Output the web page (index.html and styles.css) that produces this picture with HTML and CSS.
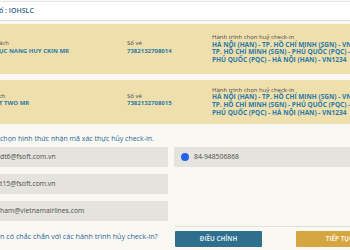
FILE: index.html
```html
<!DOCTYPE html>
<html lang="vi">
<head>
    <meta charset="UTF-8">
    <title>Hủy check-in</title>
    <link rel="stylesheet" href="styles.css">
</head>
<body>
<div class="page">
    <div class="pnr-box">ố : IOHSLC</div>

    <div class="ticket ticket-first">
        <div class="col">
            <div class="label">ách</div>
            <div class="value">ỤC NANG HUY CKIN MR</div>
        </div>
        <div class="col">
            <div class="label">Số vé</div>
            <div class="value">7382132708014</div>
        </div>
        <div class="route">
            <div class="label">Hành trình chọn huỷ check-in</div>
            <div class="value">HÀ NỘI (HAN) - TP. HỒ CHÍ MINH (SGN) - VN1234</div>
            <div class="value">TP. HỒ CHÍ MINH (SGN) - PHÚ QUỐC (PQC) - VN1234</div>
            <div class="value">PHÚ QUỐC (PQC) - HÀ NỘI (HAN) - VN1234</div>
        </div>
    </div>

    <div class="ticket">
        <div class="col">
            <div class="label">ch</div>
            <div class="value">T TWO MR</div>
        </div>
        <div class="col">
            <div class="label">Số vé</div>
            <div class="value">7382132708015</div>
        </div>
        <div class="route">
            <div class="label">Hành trình chọn huỷ check-in</div>
            <div class="value">HÀ NỘI (HAN) - TP. HỒ CHÍ MINH (SGN) - VN1234</div>
            <div class="value">TP. HỒ CHÍ MINH (SGN) - PHÚ QUỐC (PQC) - VN1234</div>
            <div class="value">PHÚ QUỐC (PQC) - HÀ NỘI (HAN) - VN1234</div>
        </div>
    </div>

    <p class="hint">chọn hình thức nhận mã xác thực hủy check-in.</p>

    <div class="options">
        <div class="option">dt6@fsoft.com.vn</div>
        <div class="option option-phone"><span class="radio"></span>84-948506868</div>
        <div class="option">t15@fsoft.com.vn</div>
        <div class="empty"></div>
        <div class="option">ham@vietnamairlines.com</div>
        <div class="empty"></div>
    </div>

    <div class="footer">
        <div class="question">n có chắc chắn với các hành trình hủy check-in?</div>
        <div class="actions">
            <a class="button button-edit" href="#">ĐIỀU CHỈNH</a>
            <a class="button button-next" href="#">TIẾP TỤC</a>
        </div>
    </div>
</div>
</body>
</html>
```

FILE: styles.css
```css
html,body{
    width: 100%;
    height: 100%;
    margin: 0;
    padding: 0;
    overflow: hidden;
    background-color: #f9f8f3;
    font-family: "Open Sans","Noto Sans",Arial,sans-serif;
}
.page{
    width: 400px;
}
.pnr-box{
    margin-top: 1px;
    height: 18px;
    line-height: 18px;
    background-color: #fff;
    border-top: 1px solid #e6e6e6;
    border-bottom: 1px solid #d8d8d8;
    font-size: 7px;
    font-weight: 600;
    color: #2c5f88;
    text-indent: -1px;
}
.ticket{
    display: grid;
    grid-template-columns: 128px 84px 1fr;
    background-color: #efdfad;
    margin-top: 6px;
    padding: 7px 0;
}
.ticket-first{
    margin-top: 3px;
    padding: 10px 0;
}
.ticket .col{
    padding-top: 6px;
}
.ticket .label{
    font-size: 6px;
    line-height: 7.5px;
    color: #4a4a4a;
    white-space: nowrap;
}
.ticket .value{
    font-size: 6.5px;
    line-height: 7.5px;
    font-weight: 700;
    color: #2a7aa6;
    white-space: nowrap;
}
.ticket .col .value{
    font-size: 6px;
}
.ticket .col .label,
.ticket .col .value{
    text-indent: -1px;
}
.ticket .route .label{
    line-height: 6.5px;
}
.ticket .route .value{
    line-height: 7.8px;
}
.hint{
    margin: 11px 0 0;
    font-size: 7px;
    line-height: 8px;
    color: #2a6797;
}
.options{
    display: grid;
    grid-template-columns: 168px 1fr;
    grid-auto-rows: 20px;
    column-gap: 6px;
    row-gap: 7px;
    margin-top: 4px;
}
.option{
    display: flex;
    align-items: center;
    background-color: #e5e3de;
    font-size: 6.8px;
    color: #4d4d4d;
}
.option-phone{
    padding-left: 7px;
}
.radio{
    width: 8px;
    height: 8px;
    border-radius: 50%;
    background-color: #2563eb;
    margin-right: 5px;
}
.footer{
    display: grid;
    grid-template-columns: 175px 1fr;
    align-items: center;
    margin-top: 5px;
}
.question{
    font-size: 7.2px;
    color: #2a6797;
    white-space: nowrap;
}
.actions{
    display: flex;
    gap: 34px;
    border-top: 1px solid #e2dfd7;
    padding-top: 4px;
}
.button{
    width: 87px;
    height: 16px;
    line-height: 16px;
    text-align: center;
    text-decoration: none;
    font-size: 6.3px;
    font-weight: 700;
    border-radius: 1px;
}
.button-edit{
    background-color: #2f6f8e;
    color: #d6e4ec;
}
.button-next{
    background-color: #d5a63f;
    color: #fbf1dc;
}
```
